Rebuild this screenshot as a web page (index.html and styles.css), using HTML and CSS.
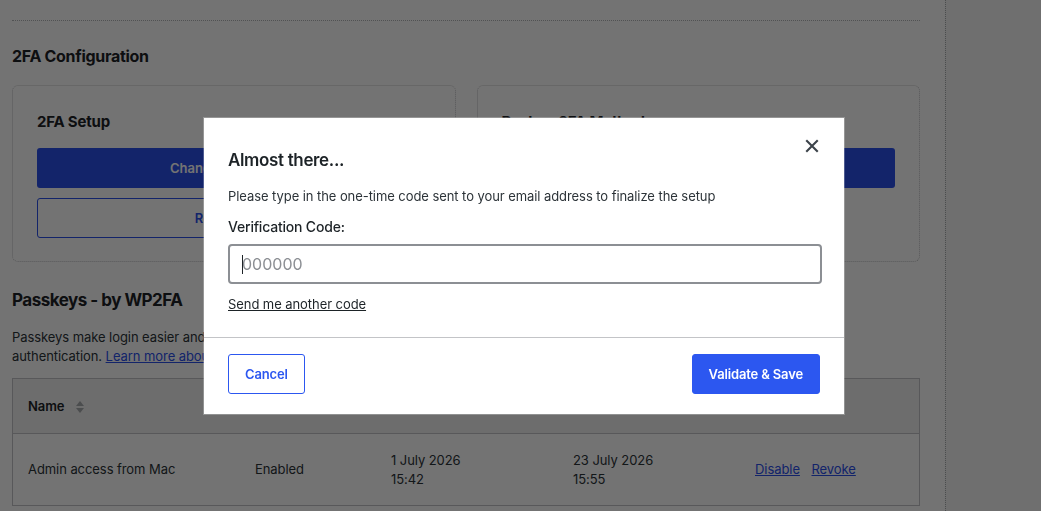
FILE: index.html
```html
<!DOCTYPE html>
<html lang="en">
<head>
    <meta charset="UTF-8">
    <meta name="viewport" content="width=device-width, initial-scale=1.0">
    <title>WP 2FA - Profile</title>
    <link rel="stylesheet" href="styles.css">
</head>
<body>
    <div class="page">
        <div class="main">
            <hr class="sep">

            <h2 class="section-title">2FA Configuration</h2>
            <div class="cards">
                <div class="card">
                    <h3>2FA Setup</h3>
                    <button class="btn btn-primary">Change 2FA Method</button>
                    <button class="btn btn-outline">Remove 2FA</button>
                </div>
                <div class="card">
                    <h3>Backup 2FA Methods</h3>
                    <button class="btn btn-primary">Generate Backup Codes</button>
                </div>
            </div>

            <h2 class="section-title passkeys-title">Passkeys - by WP2FA</h2>
            <p class="intro">Passkeys make login easier and more secure by letting you sign in with your device's fingerprint, face or screen lock, speeding up<br>
                authentication. <a href="#">Learn more about passkeys</a></p>

            <table class="passkeys">
                <thead>
                    <tr>
                        <th class="col-name">Name <span class="sort"><i class="up"></i><i class="down"></i></span></th>
                        <th class="col-status">Status</th>
                        <th class="col-date">Created</th>
                        <th class="col-date">Last used</th>
                        <th class="col-actions">Actions</th>
                    </tr>
                </thead>
                <tbody>
                    <tr>
                        <td>Admin access from Mac</td>
                        <td>Enabled</td>
                        <td>1 July 2026<br>15:42</td>
                        <td>23 July 2026<br>15:55</td>
                        <td><a href="#">Disable</a> <a href="#">Revoke</a></td>
                    </tr>
                </tbody>
            </table>
        </div>
        <div class="side"></div>
    </div>

    <div class="overlay">
        <div class="modal">
            <button class="close" aria-label="Close">
                <svg width="14" height="14" viewBox="0 0 14 14"><path d="M2 2 L12 12 M12 2 L2 12" stroke="#3c434a" stroke-width="2.1" stroke-linecap="square"/></svg>
            </button>
            <div class="modal-body">
                <h3>Almost there...</h3>
                <p>Please type in the one-time code sent to your email address to finalize the setup</p>
                <label for="code">Verification Code:</label>
                <div class="field">
                    <input type="text" id="code" placeholder="000000">
                    <span class="caret"></span>
                </div>
                <a href="#" class="resend">Send me another code</a>
            </div>
            <div class="modal-footer">
                <button class="mbtn cancel">Cancel</button>
                <button class="mbtn save">Validate &amp; Save</button>
            </div>
        </div>
    </div>
</body>
</html>
```

FILE: styles.css
```css
body {
    margin: 0;
    font-family: Inter, "Noto Sans", sans-serif;
    letter-spacing: -0.07px;
    color: #1d2327;
    background-color: #fff;
}

.page {
    display: flex;
    height: 511px;
    overflow: hidden;
}

.main {
    width: 945px;
    flex-shrink: 0;
    box-sizing: border-box;
    padding: 20px 25px 0 12px;
    background-color: #fff;
}

.side {
    flex: 1;
    border-left: 1px dotted #a7aaad;
    background-color: #f6f7f7;
}

.sep {
    margin: 0;
    border: none;
    border-top: 1px dotted #b4b6b9;
}

.section-title {
    margin: 25px 0 19px;
    font-size: 16px;
    line-height: 20px;
    font-weight: 700;
    letter-spacing: -0.3px;
}

.cards {
    display: grid;
    grid-template-columns: 1fr 1fr;
    gap: 21px;
}

.card {
    display: flex;
    flex-direction: column;
    gap: 10px;
    padding: 26px 24px 23px;
    border: 1px dotted #c3c4c7;
    border-top: 1px solid #e5e5e5;
    border-radius: 6px;
    height: 177px;
    box-sizing: border-box;
}

.card h3 {
    margin: 0 0 6px;
    font-size: 15px;
    line-height: 20px;
    font-weight: 700;
    letter-spacing: -0.2px;
}

.btn {
    height: 40px;
    border-radius: 3px;
    font-family: inherit;
    font-size: 13px;
    font-weight: 600;
}

.btn-primary {
    background-color: #2a50ec;
    color: #fff;
    border: none;
}

.btn-outline {
    background-color: #fff;
    color: #2a50ec;
    border: 1px solid #2a50ec;
}

.passkeys-title {
    margin: 27px 0 17px;
    font-size: 17px;
    line-height: 22px;
    letter-spacing: -0.5px;
}

.intro {
    margin: 0 0 12px;
    font-size: 13px;
    line-height: 19px;
    color: #2c3338;
}

.intro a,
.passkeys a {
    color: #2a50ec;
}

.passkeys {
    width: 100%;
    border-collapse: collapse;
    border: 1px solid #c3c4c7;
    table-layout: fixed;
    font-size: 13px;
}

.passkeys th {
    height: 54px;
    padding: 0 16px 0 15px;
    text-align: left;
    font-weight: 600;
    background-color: #f1f2f2;
    border-bottom: 1px solid #c3c4c7;
}

.passkeys td {
    height: 71px;
    padding: 0 16px 0 15px;
    line-height: 19px;
    color: #2c3338;
    border-bottom: 1px solid #c3c4c7;
}

.passkeys td a {
    margin-right: 8px;
}

.col-name { width: 196px; }
.col-status { width: 105px; }
.col-date { width: 151px; }

.sort {
    display: inline-flex;
    flex-direction: column;
    gap: 2px;
    margin-left: 8px;
    vertical-align: middle;
}

.sort i {
    width: 0;
    height: 0;
    border-left: 4px solid transparent;
    border-right: 4px solid transparent;
}

.sort .up { border-bottom: 5px solid #a7aaad; }
.sort .down { border-top: 5px solid #a7aaad; }

/* modal */
.overlay {
    position: fixed;
    inset: 0;
    background-color: rgba(0, 0, 0, 0.55);
}

.modal {
    position: absolute;
    left: 204px;
    top: 118px;
    width: 640px;
    background-color: #fff;
    box-shadow: 0 0 0 1px rgba(255, 255, 255, 0.25);
}

.close {
    position: absolute;
    top: 20px;
    right: 24px;
    width: 16px;
    height: 16px;
    padding: 0;
    border: none;
    background: none;
    display: flex;
    align-items: center;
    justify-content: center;
}

.modal-body {
    padding: 32px 22px 24px 24px;
    border-bottom: 1px solid #c3c4c7;
}

.modal-body h3 {
    margin: 0;
    font-size: 17px;
    line-height: 20px;
    font-weight: 600;
    letter-spacing: -0.35px;
}

.modal-body p {
    margin: 17px 0 13px;
    font-size: 13px;
    line-height: 18px;
    color: #2c3338;
}

.modal-body label {
    display: block;
    margin-bottom: 8px;
    font-size: 14px;
    line-height: 18px;
    font-weight: 500;
    letter-spacing: -0.2px;
}

.field {
    position: relative;
}

.field input {
    display: block;
    width: 100%;
    height: 40px;
    box-sizing: border-box;
    padding: 0 12px;
    border: 2px solid #8c8f94;
    border-radius: 4px;
    font-family: inherit;
    font-size: 16px;
    color: #2c3338;
}

.field input::placeholder {
    color: #8c8f94;
}

.caret {
    position: absolute;
    left: 14px;
    top: 11px;
    width: 1px;
    height: 19px;
    background-color: #1d2327;
}

.resend {
    display: inline-block;
    margin-top: 11px;
    font-size: 13px;
    line-height: 18px;
    color: #1d2327;
}

.modal-footer {
    display: flex;
    justify-content: space-between;
    padding: 16px 24px 20px;
}

.mbtn {
    height: 40px;
    padding: 0 16px;
    border-radius: 3px;
    font-family: inherit;
    font-size: 13px;
    font-weight: 600;
    letter-spacing: -0.15px;
}

.cancel {
    background-color: #fff;
    color: #2c57f0;
    border: 1px solid #2c57f0;
}

.save {
    background-color: #2c57f0;
    color: #fff;
    border: 1px solid #2c57f0;
}
```
